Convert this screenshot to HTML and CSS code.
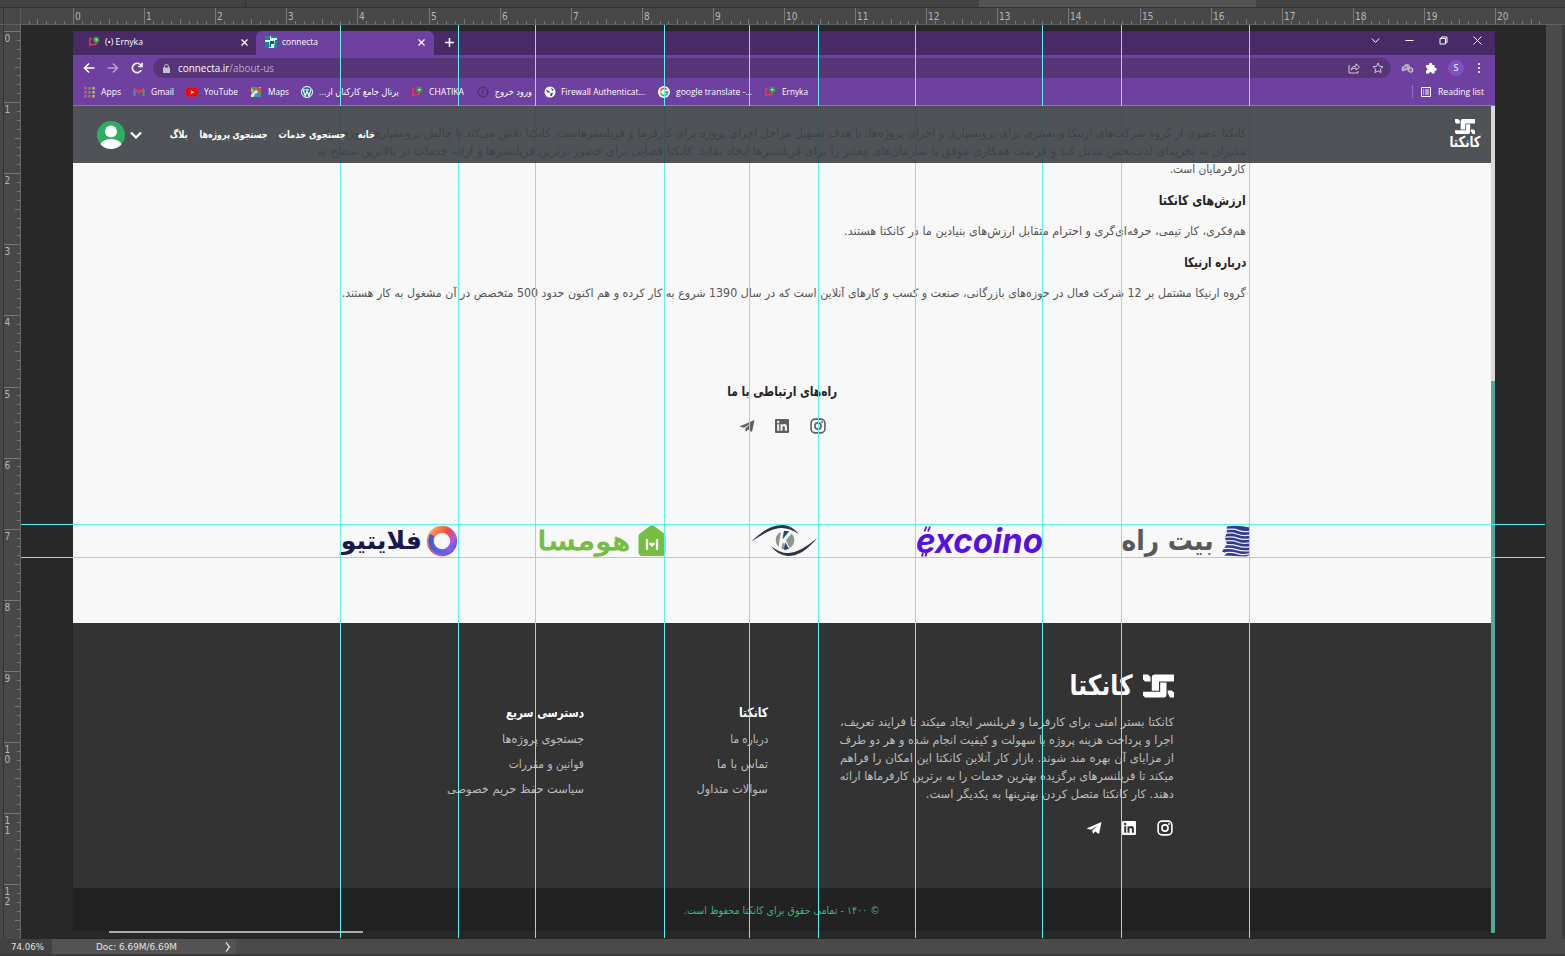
FILE: index.html
```html
<!DOCTYPE html>
<html lang="fa">
<head>
<meta charset="utf-8">
<title>connecta</title>
<link rel="stylesheet" href="styles.css">
</head>
<body>
<svg class="defs" width="0" height="0">
  <defs>
    <linearGradient id="ringA" x1="0" y1="0" x2="1" y2="1"><stop offset="0" stop-color="#ffb054"/><stop offset=".4" stop-color="#f0454c"/><stop offset=".7" stop-color="#b558e8"/><stop offset="1" stop-color="#3b55e0"/></linearGradient>
    <linearGradient id="ringB" x1="0" y1="0" x2="1" y2="0"><stop offset="0" stop-color="#2d62e8"/><stop offset="1" stop-color="#8f5cf0"/></linearGradient>
  </defs>
  <symbol id="mark" viewBox="0 0 31 23"><path fill="#fff" d="M0 0h5l2.500 2.500V7H2L0 5zM12 0h19v7H16v9.200H8.800V3.200Q8.800 0 12 0zM17.200 8h6.300v12q0 3-3 3H2l-2-2v-3.800h17.200zM24.700 18.500V16h4l2.300 2v5h-4z"/></symbol>
  <symbol id="insta" viewBox="0 0 16 16"><g fill="none" stroke="currentColor"><rect x="1.1" y="1.1" width="13.8" height="13.8" rx="3.8" stroke-width="1.6"/><circle cx="8" cy="8" r="3.1" stroke-width="1.6"/></g><circle cx="12" cy="4" r="1" fill="currentColor"/></symbol>
  <symbol id="linkedin" viewBox="0 0 16 16"><path fill="currentColor" fill-rule="evenodd" d="M2 1h12q1 0 1 1v12q0 1-1 1H2q-1 0-1-1V2q0-1 1-1zM3.2 6.3v6.5h2V6.300zM3 4a1.200 1.200 0 1 0 2.400 0A1.200 1.200 0 1 0 3 4zM6.500 6.300v6.500h2V9.500q0-1.500 1.200-1.500T10.900 9.500v3.300h2V9q0-2.900-2.400-2.900-1.300 0-2 1v-.8z"/></symbol>
  <symbol id="plane" viewBox="0 0 16 16"><path fill="currentColor" d="M.5 8.500 15.500 2 13 14 9 11.500 7 14l-.8-3.600L11.800 5.500 5 9.800z"/></symbol>
  <symbol id="erny" viewBox="0 0 12 12"><path d="M4 2.500H1.800v7.200l1.800-1.200H8V7" fill="none" stroke="#e2375f" stroke-width="1.500"/><circle cx="8.300" cy="3.800" r="3.100" fill="#3f9a45"/><circle cx="8.300" cy="3.800" r="1" fill="#d9f1d6"/></symbol>
</svg>

<div class="app">
  <div class="tabstrip"><i class="doc-edge"></i><i class="doc-tab"></i></div>
  <svg class="ruler-h" id="rulerH" width="1565" height="17"></svg>
  <div class="work">
    <svg class="ruler-v" id="rulerV" width="21" height="914"></svg>
    <div class="canvas">
      <div class="browser">
        <div class="titlebar">
          <div class="tab inactive"><svg width="12" height="12"><use href="#erny"/></svg><span class="fit" data-w="38">(•) Ernyka</span><svg class="close" width="7" height="7" viewBox="0 0 7 7"><path d="M.5.5l6 6m0-6l-6 6" stroke="#fff" stroke-width="1.300"/></svg></div>
          <div class="tab active"><svg width="12" height="12" viewBox="0 0 12 12"><path fill="#d9f4ef" d="M0 0h12v12H0z"/><path d="M0 0h5v4H0zM6 0h6v2H6zM0 6h4v6H0zM10 4h2v8H9z" fill="#13888d"/><path d="M5 5h4v3H6v3H4.500z" fill="#0b5f74"/></svg><span class="fit" data-w="36">connecta</span><svg class="close" width="7" height="7" viewBox="0 0 7 7"><path d="M.5.5l6 6m0-6l-6 6" stroke="#fff" stroke-width="1.300"/></svg></div>
          <svg class="plus" width="9" height="9" viewBox="0 0 9 9"><path d="M4.500 0v9M0 4.500h9" stroke="#fff" stroke-width="1.500"/></svg>
          <div class="winctl">
            <svg width="9" height="9" viewBox="0 0 9 9"><path d="M.8 2.500l3.700 4 3.700-4"/></svg>
            <svg width="9" height="9" viewBox="0 0 9 9"><path d="M.5 4.500h8"/></svg>
            <svg width="9" height="9" viewBox="0 0 9 9"><path d="M1 2.500h5.500V8H1zM2.500 2.500V1H8v5.500H6.500"/></svg>
            <svg width="9" height="9" viewBox="0 0 9 9"><path d="M.5.5l8 8m0-8l-8 8"/></svg>
          </div>
        </div>
        <div class="toolbar">
          <div class="navbtns">
            <svg width="12" height="12" viewBox="0 0 12 12"><path d="M11.500 6H1.500M6 1.500L1.500 6 6 10.500"/></svg>
            <svg class="dim" width="12" height="12" viewBox="0 0 12 12"><path d="M.5 6h10M6 1.500L10.500 6 6 10.500"/></svg>
            <svg width="12" height="12" viewBox="0 0 12 12"><path d="M10.300 8A4.700 4.700 0 1 1 9.500 2.700L11 4.500M11 .8v3.700H7.300"/></svg>
          </div>
          <div class="omnibox">
            <svg width="7" height="9" viewBox="0 0 7 9"><path fill="#c9bdd6" stroke="none" d="M0 3.500h7V9H0z"/><path d="M1.500 4V2.500a2 2 0 0 1 4 0V4" fill="none" stroke="#c9bdd6"/></svg>
            <span class="fit url" data-w="96">connecta.ir<span class="path">/about-us</span></span>
            <svg class="share" width="12" height="12" viewBox="0 0 12 12"><path d="M1 3v8h9V9M3 8q.5-4 5-4V1.800L11.500 5 8 8V6Q5 6 3 8z"/></svg>
            <svg width="12" height="12" viewBox="0 0 12 12"><path d="M6 1l1.500 3.300 3.500.4-2.600 2.400.7 3.500L6 8.900l-3.100 1.700.7-3.500L1 4.700l3.500-.4z"/></svg>
          </div>
          <div class="exts">
            <svg width="13" height="12" viewBox="0 0 13 12"><path fill="#b7aabd" d="M.5 7Q.5 4 3 4 4 1 7 2q2 .5 2 3 3 .5 3.500 3 0 2.500-2.500 2.500L6 8 2 9.500Q.5 9 .5 7z"/><circle cx="9.500" cy="8" r="2.200" fill="#84758c" stroke="#ddd" stroke-width=".8"/><path d="M3 6l3-1" stroke="#6f557d"/></svg>
            <svg width="12" height="12" viewBox="0 0 12 12"><path fill="#fff" d="M1 3h3a1.700 1.700 0 1 1 3.200 0H9.500v2.800a1.700 1.700 0 1 1 0 3.200v2.500H7a1.500 1.500 0 0 0-3 0H1V8.500a1.500 1.500 0 0 0 0-3z"/></svg>
            <b class="profile">S</b>
            <svg width="4" height="12" viewBox="0 0 4 12"><g fill="#fff"><circle cx="2" cy="2" r="1.100"/><circle cx="2" cy="6" r="1.100"/><circle cx="2" cy="10" r="1.100"/></g></svg>
          </div>
        </div>
        <div class="bookmarks">
          <div class="bm"><svg width="12" height="12" viewBox="0 0 12 12"><path stroke="#e45a55" stroke-width="2.400" stroke-dasharray="2.500 1.500" d="M2.500 1v11"/><path stroke="#58a36b" stroke-width="2.400" stroke-dasharray="2.500 1.500" d="M6.500 1v11"/><path stroke="#e4b04b" stroke-width="2.400" stroke-dasharray="2.500 1.500" d="M10.500 1v11"/></svg><span class="fit" data-w="20">Apps</span></div>
          <div class="bm"><svg width="12" height="12" viewBox="0 0 12 12"><path d="M1.500 10V3" stroke="#4a86e8" stroke-width="2"/><path d="M10.500 10V3" stroke="#41a463" stroke-width="2"/><path d="M1 2.500l5 4 5-4" stroke="#e34134" stroke-width="2.200" fill="none"/></svg><span class="fit" data-w="23">Gmail</span></div>
          <div class="bm"><svg width="12" height="12" viewBox="0 0 12 12"><rect y="2" width="12" height="8.500" rx="2.200" fill="#f00"/><path d="M4.800 4.200v4l3.500-2z" fill="#fff"/></svg><span class="fit" data-w="34">YouTube</span></div>
          <div class="bm"><svg width="12" height="12" viewBox="0 0 12 12"><path fill="#3fa45b" d="M1 1h10v10H1z"/><path fill="#e8eef3" d="M1 9l8-8h2v2l-8 8H1z"/><path fill="#4385e8" d="M6 7l5 4H7L4 9z"/><path fill="#f0bf3c" d="M1 2l3 3-1 2-2-2z"/><circle cx="8.800" cy="3.400" r="2.400" fill="#e14637"/></svg><span class="fit" data-w="21">Maps</span></div>
          <div class="bm"><svg width="12" height="12" viewBox="0 0 12 12"><circle cx="6" cy="6" r="5.500" fill="#227294" stroke="#fff"/><path d="M2 3.800l2.300 6L6 5l1.900 4.800L10 3.500M1.500 3.800h3M5 3.800h3" fill="none" stroke="#fff" stroke-width="1.100"/></svg><span class="fit fa" data-w="80">پرتال جامع کارکنان ار...</span></div>
          <div class="bm"><svg width="12" height="12"><use href="#erny"/></svg><span class="fit" data-w="35">CHATIKA</span></div>
          <div class="bm"><svg width="12" height="12" viewBox="0 0 12 12"><circle cx="6" cy="6" r="4.800" fill="none" stroke="#4b3560" stroke-width="1.400" stroke-dasharray="3.500 .8"/><path d="M6 3v3.500L4.500 8" fill="none" stroke="#4b3560"/></svg><span class="fit fa" data-w="37">ورود خروج</span></div>
          <div class="bm"><svg width="12" height="12" viewBox="0 0 12 12"><circle cx="6" cy="6" r="5.500" fill="#fff"/><path d="M2 3.500l3 1.500 1 2-2.500-.5zM7 2l3 1.500-2 1.500zM6.500 7.500L9 6.500 8 10 6 9.500z" fill="#56327d"/></svg><span class="fit" data-w="84">Firewall Authenticat...</span></div>
          <div class="bm"><svg width="12" height="12" viewBox="0 0 12 12"><circle cx="6" cy="6" r="6" fill="#fff"/><g fill="none" stroke-width="1.700"><path d="M8.500 3.500A3.600 3.600 0 0 0 2.700 4.600" stroke="#e94235"/><path d="M2.700 4.400a3.600 3.600 0 0 0 0 3.200" stroke="#fbbc05"/><path d="M2.700 7.500a3.600 3.600 0 0 0 5.500 1.300" stroke="#34a853"/><path d="M8.200 8.800A3.600 3.600 0 0 0 9.600 6H6" stroke="#4285f4"/></g></svg><span class="fit" data-w="76">google translate -...</span></div>
          <div class="bm"><svg width="12" height="12"><use href="#erny"/></svg><span class="fit" data-w="26">Ernyka</span></div>
          <div class="bm reading"><svg width="10" height="10" viewBox="0 0 10 10"><path d="M.5.5h9v9h-9zM2 3h1.200M4.200 3H8M2 5h1.200M4.200 5H8M2 7h1.200M4.200 7H8" fill="none" stroke="#fff"/></svg><span class="fit" data-w="46">Reading list</span></div>
        </div>

        <div class="viewport">
          <div class="page">
            <header class="site-header">
              <svg width="28" height="28" viewBox="0 0 28 28"><clipPath id="av"><circle cx="14" cy="14" r="14"/></clipPath><g clip-path="url(#av)"><path fill="#2fae60" d="M0 0h28v28H0z"/><circle cx="14" cy="10.500" r="6" fill="#fff"/><ellipse cx="14" cy="25" rx="11" ry="7" fill="#fff"/></g></svg>
              <svg class="chev" width="12" height="8" viewBox="0 0 12 8"><path d="M1 1.500l5 5 5-5" fill="none" stroke="#fff" stroke-width="2.200"/></svg>
              <nav class="menu">
                <a class="fit fa" data-w="18">بلاگ</a><a class="fit fa" data-w="68">جستجوی پروژه‌ها</a><a class="fit fa" data-w="67">جستجوی خدمات</a><a class="fit fa" data-w="17">خانه</a>
              </nav>
              <div class="brand"><svg width="20" height="15"><use href="#mark"/></svg><b class="fit fa" data-w="31">کانکتا</b></div>
            </header>
            <main class="content">
              <div class="article">
                <p class="fit fa" data-w="928">کانکتا عضوی از گروه شرکت‌های ارنیکا و بستری برای برونسپاری و اجرای پروژه‌ها، با هدف تسهیل مراحل اجرای پروژه برای کارفرما و فریلنسرهاست. کانکتا تلاش می‌کند تا چالش برونسپاری پروژه برای</p>
                <p class="fit fa" data-w="928">مدیران به تجربه‌ای لذت‌بخش تبدیل کند و فرصت همکاری موفق با سازمان‌های معتبر را برای فریلنسرها ایجاد نماید. کانکتا فضایی برای حضور برترین فریلنسرها و ارائه خدمات در بالاترین سطح به</p>
                <p class="fit fa" data-w="76">کارفرمایان است.</p>
                <h2 class="fit fa" data-w="87">ارزش‌های کانکتا</h2>
                <p class="fit fa" data-w="402">هم‌فکری، کار تیمی، حرفه‌ای‌گری و احترام متقابل ارزش‌های بنیادین ما در کانکتا هستند.</p>
                <h2 class="fit fa" data-w="62">درباره ارنیکا</h2>
                <p class="fit fa" data-w="904">گروه ارنیکا مشتمل بر 12 شرکت فعال در حوزه‌های بازرگانی، صنعت و کسب و کارهای آنلاین است که در سال 1390 شروع به کار کرده و هم اکنون حدود 500 متخصص در آن مشغول به کار هستند.</p>
              </div>
              <div class="contact">
                <h2 class="fit fa" data-w="110">راه‌های ارتباطی با ما</h2>
                <div class="social"><svg><use href="#plane"/></svg><svg><use href="#linkedin"/></svg><svg><use href="#insta"/></svg></div>
              </div>
              <div class="partners">
                <div class="partner flytio"><b class="fit fa" data-w="81">فلایتیو</b><svg width="32" height="32" viewBox="0 0 32 32"><circle cx="16" cy="16" r="11.700" fill="none" stroke="url(#ringA)" stroke-width="7"/><path d="M6 10a11.700 11.700 0 0 0 20 12" fill="none" stroke="url(#ringB)" stroke-width="4.500"/></svg></div>
                <div class="partner homsa"><b class="fit fa" data-w="93">هومسا</b><svg width="28" height="31" viewBox="0 0 28 31"><path fill="#76bd43" d="M12 1q2-1.500 4 0l10 7.500q1.500 1 1.500 3V27q0 4-4 4h-19q-4 0-4-4V11.500q0-2 1.500-3z"/><path d="M9 14v11M19 14v11" stroke="#fff" stroke-width="2.200"/><path fill="#fff" d="M14 22l-3-3q0-2.500 3-1 3-1.500 3 1z"/></svg></div>
                <div class="partner eye"><svg width="68" height="33" viewBox="0 0 68 33"><path fill="#333448" d="M1 18Q18 0 34 1q8 1 15 9Q38 3 30 4 19 5 1 18zM67 14Q53 32 38 32 27 31 21 22q10 8 18 7 12-1 28-15z"/><circle cx="35" cy="16" r="9.300" fill="#8e9694"/><path fill="#f7f7f7" d="M31 7h3l-2 8 8-8h4l-8 9 4 9h-4l-3-7-2 8h-3z"/><path fill="#174d72" d="M34 7h5l-6 8zM35 18l4 7-5 1z"/></svg></div>
                <div class="partner excoino"><svg width="14" height="33" viewBox="0 0 14 33"><path d="M6.500 7.500l2-5M10 7.500l2-5M4 32.500l1-4M7.500 32.500l1-4" stroke="#5511e0" stroke-width="1.800"/></svg><b class="fit" data-w="127">excoino</b></div>
                <div class="partner beyt"><b class="fit fa" data-w="92">بیت راه</b><svg width="28" height="32" viewBox="0 0 29 32"><path fill="#343b8c" d="M5 1q10-2 24 1v28q-2 2-5 2l-22-1 3-2-5-2 5-8-2-7 2-4z"/><path d="M5 4q8-1 12 1t12 1M3 8q8-1 13 1t13 1M3 12q8-1 13 1t13 1M2 16q10-1 14 1t13 1M1 20q10-1 15 1t13 1M1 24q8-1 14 1t14 1M3 28q8-1 13 1t13 0" fill="none" stroke="#eef0f8" stroke-width="1.300"/></svg></div>
              </div>
            </main>
            <footer class="site-footer">
              <div class="col quick"><h3 class="fit fa" data-w="78">دسترسی سریع</h3><a class="fit fa" data-w="82">جستجوی پروژه‌ها</a><a class="fit fa" data-w="75">قوانین و مقررات</a><a class="fit fa" data-w="137">سیاست حفظ حریم خصوصی</a></div>
              <div class="col links"><h3 class="fit fa" data-w="29">کانکتا</h3><a class="fit fa" data-w="38">درباره ما</a><a class="fit fa" data-w="51">تماس با ما</a><a class="fit fa" data-w="71">سوالات متداول</a></div>
              <div class="about">
                <div class="logo"><b class="fit fa" data-w="63">کانکتا</b><svg width="31" height="24"><use href="#mark"/></svg></div>
                <p class="fit fa" data-w="334">کانکتا بستر امنی برای کارفرما و فریلنسر ایجاد میکند تا فرایند تعریف،</p>
                <p class="fit fa" data-w="334">اجرا و پرداخت هزینه پروژه با سهولت و کیفیت انجام شده و هر دو طرف</p>
                <p class="fit fa" data-w="334">از مزایای آن بهره مند شوند. بازار کار آنلاین کانکتا این امکان را فراهم</p>
                <p class="fit fa" data-w="334">میکند تا فریلنسرهای برگزیده بهترین خدمات را به برترین کارفرماها ارائه</p>
                <p class="fit fa" data-w="248">دهند. کار کانکتا متصل کردن بهترینها به یکدیگر است.</p>
                <div class="social"><svg><use href="#plane"/></svg><svg><use href="#linkedin"/></svg><svg><use href="#insta"/></svg></div>
              </div>
            </footer>
            <div class="copyright"><span class="fit fa" data-w="196">© ۱۴۰۰ - تمامی حقوق برای کانکتا محفوظ است.</span></div>
            <div class="edge"></div>
          </div>
          <div class="scroll"></div>
        </div>
      </div>
    </div>
    <div class="side"></div>
  </div>
  <div class="status"><span class="zoom"><span class="fit" data-w="33">74.06%</span></span><span class="doc"><span class="fit" data-w="81">Doc: 6.69M/6.69M</span><svg width="6" height="10" viewBox="0 0 6 10"><path d="M1 .5L4.500 5 1 9.500" fill="none" stroke="#ddd" stroke-width="1.300"/></svg></span></div>
  <svg class="guides" id="guides" width="1565" height="956"></svg>
</div>
<script src="main.js"></script>
</body>
</html>
```
FILE: styles.css
```css
* { box-sizing: border-box; }
body { margin: 0; background: #282828; overflow: hidden; }
svg { display: block; flex: none; }
.defs { position: absolute; }
h2, h3, p { margin: 0; }

.fit { display: block; flex: none; white-space: nowrap; }
.fit > .ink { display: inline-block; transform-origin: left center; }
.fit.fa { direction: rtl; text-align: right; font-family: "DejaVu Sans", sans-serif; }
.fit.fa > .ink { transform-origin: right center; }

.app { position: relative; width: 1565px; height: 956px; display: flex; flex-direction: column; font-family: "Open Sans", sans-serif; }
.tabstrip { height: 8px; background: #424242; border-bottom: 1px solid #333; display: flex; }
.doc-edge { width: 246px; border-right: 1px solid #333; }
.doc-tab { margin-left: 733px; width: 277px; background: #535353; }
.ruler-h { background: #484848; border-bottom: 1px solid #5f6060; }
.work { display: flex; height: 914px; }
.ruler-v { background: #484848; border-right: 1px solid #686868; }
.canvas { width: 1525px; padding: 6px 0 0 52px; background: #282828; }
.side { flex: 1; background: #4a4a4a; border-right: 3px solid #3b3b3b; }
.status { height: 17px; display: flex; background: #4a4a4a; border-bottom: 2px solid #3b3939; color: #e2e2e2; font: 9.5px/16px "DejaVu Sans Condensed", "DejaVu Sans", sans-serif; }
.zoom { width: 52px; padding-left: 11px; background: #424242; }
.doc { width: 184px; padding-left: 44px; display: flex; align-items: center; gap: 48px; background: #535353; }
.guides { position: absolute; left: 0; top: 0; pointer-events: none; }
.ruler-text { font: 10px "DejaVu Sans Condensed", "DejaVu Sans", sans-serif; fill: #b5b5b5; }

.browser { width: 1422px; height: 902px; color: #fff; font-size: 9.5px; }
.titlebar { height: 24px; display: flex; align-items: center; background: #482a66; }
.tab { height: 24px; display: flex; align-items: center; padding-bottom: 2px; }
.tab .fit { margin-top: -1px; }
.tab .close { margin-left: auto; }
.inactive { width: 183px; padding-left: 15px; padding-right: 8px; gap: 5px; }
.active { width: 178px; padding-left: 9px; padding-right: 9px; gap: 5px; background: #6e40a0; border-radius: 6px 6px 0 0; }
.plus { margin: -2px 0 0 11px; }
.winctl { margin-left: auto; display: flex; gap: 25px; padding: 0 13px 6px 0; fill: none; stroke: #fff; stroke-width: 1; }
.toolbar { height: 26px; display: flex; align-items: center; background: #6e40a0; }
.navbtns { width: 80px; padding-left: 10px; display: flex; gap: 12px; fill: none; stroke: #fff; stroke-width: 1.600; }
.dim { opacity: .5; }
.omnibox { width: 1238px; height: 20px; border-radius: 10px; background: #573478; display: flex; align-items: center; padding: 0 7px 0 10px; gap: 8px; font-size: 10px; fill: none; stroke: #d5cadd; stroke-width: 1; }
.omnibox .share { margin-left: auto; margin-right: 4px; }
.path { color: #b7a6c9; }
.exts { display: flex; align-items: center; gap: 11px; padding-left: 10px; }
.profile { width: 16px; height: 16px; border-radius: 50%; background: #7d52c4; text-align: center; font: 9px/16px "Open Sans", sans-serif; }
.exts > :last-child { margin-left: 2px; }
.bookmarks { height: 25px; display: flex; align-items: center; gap: 12.300px; padding: 0 11px 3px 10px; background: #6e40a0; border-bottom: 1px solid #9271b4; }
.bm { display: flex; align-items: center; gap: 5.800px; }
.bm .fa { font-size: 9.500px; }
.reading { margin-left: auto; padding-left: 8px; gap: 7px; border-left: 1px solid #9271b4; }

.viewport { display: flex; height: 827px; }
.page { position: relative; width: 1418px; }
.scroll { width: 4px; background: linear-gradient(#d8d8d8 275px, #57a69a 275px); }
.site-header { position: absolute; z-index: 1; left: 0; top: 0; width: 1418px; height: 57px; display: flex; align-items: center; padding: 0 11px 0 24px; background: rgba(60, 64, 69, .9); }
.chev { margin-left: 5px; }
.menu { display: flex; gap: 11.500px; margin: -2px 0 0 28px; font-weight: bold; font-size: 10.500px; }
.brand { margin-left: auto; display: flex; flex-direction: column; align-items: center; font-size: 15px; line-height: 17px; }

.content { height: 517px; padding-top: 18px; background: #f8f8f8; color: #555; }
.article { padding-right: 245px; display: flex; flex-direction: column; align-items: flex-end; }
.article p { font-size: 11.500px; line-height: 18px; }
.content h2 { font-size: 13.500px; line-height: 22px; color: #252525; }
.article h2 { margin: 11px 0; }
.contact { margin-top: 78px; display: flex; flex-direction: column; align-items: center; gap: 16px; color: #606060; }
.social { display: flex; gap: 19.500px; }
.social svg { width: 16px; height: 16px; }
.partners { margin-top: 90px; padding-left: 268px; display: flex; height: 33px; }
.partner { display: flex; align-items: center; height: 33px; }
.partner b { line-height: 30px; }
.flytio { width: 195px; gap: 4px; color: #19174b; font-size: 25px; }
.homsa { width: 214px; gap: 8px; padding-left: 1px; color: #76bd43; font-size: 26px; }
.homsa b { font-weight: normal; -webkit-text-stroke: 1px #76bd43; }
.eye { width: 166px; }
.excoino { position: relative; width: 206px; color: #5511e0; }
.excoino svg { position: absolute; left: 2px; top: 0; }
.excoino b { font: italic bold 34px/30px "Inter", "Open Sans", sans-serif; }
.beyt { gap: 8px; color: #58595b; font-size: 28px; }

.site-footer { height: 265px; padding-left: 374px; display: flex; background: #333; color: #bdbdbd; }
.col { padding-top: 81px; display: flex; flex-direction: column; align-items: flex-end; font-size: 11.500px; line-height: 25px; }
.col h3 { margin-bottom: 5px; font-size: 13px; line-height: 18px; color: #fff; }
.quick { width: 137px; }
.links { width: 71px; margin-left: 113px; }
.about { width: 334px; margin-left: 71.500px; padding-top: 51px; display: flex; flex-direction: column; align-items: flex-end; font-size: 11.500px; line-height: 18px; }
.logo { display: flex; align-items: center; gap: 10px; height: 24px; margin-bottom: 15px; color: #fff; font-size: 28px; }
.about .social { margin-top: 17px; padding-right: 1px; color: #fff; }
.copyright { height: 43px; display: flex; justify-content: center; align-items: center; background: #222; color: #3fb283; font-size: 10.500px; }
.edge { height: 2px; background: linear-gradient(90deg, #26282b 36px, #aaa 36px, #aaa 290px, #26282b 290px); }
```
FILE: main.js
```js
// Condense or widen each text run to its column measure.
document.querySelectorAll('.fit').forEach(function (el) {
  var w = +el.dataset.w;
  var ink = document.createElement('span');
  ink.className = 'ink';
  while (el.firstChild) ink.appendChild(el.firstChild);
  el.appendChild(ink);
  var natural = ink.getBoundingClientRect().width;
  ink.style.transform = 'scaleX(' + w / natural + ')';
  el.style.width = w + 'px';
});

function line(x1, y1, x2, y2, color) {
  return '<path d="M' + x1 + ' ' + y1 + 'L' + x2 + ' ' + y2 + '" stroke="' + color + '"/>';
}
function label(x, y, t) {
  return '<text class="ruler-text" x="' + x + '" y="' + y + '">' + t + '</text>';
}

// Rulers: one unit is 71.1px, divided in eighths.
var unit = 71.1, h = '', v = '', i, p, len;
for (i = -5; i <= 165; i++) {
  p = Math.round(73 + i * unit / 8) + 0.5;
  if (p > 1545) break;
  len = i % 8 === 0 ? 16 : i % 4 === 0 ? 5 : 3;
  h += line(p, 16 - len, p, 16, '#777');
  if (i % 8 === 0) h += label(p + 1.5, 12, i / 8);
}
for (i = 0; i <= 101; i++) {
  p = Math.round(6 + i * unit / 8) + 0.5;
  len = i % 8 === 0 ? 16 : i % 4 === 0 ? 5 : 3;
  v += line(20 - len, p, 20, p, '#777');
  if (i % 8 === 0) String(i / 8).split('').forEach(function (d, k) { v += label(4.5, p + 10 + k * 10, d); });
}
v += line(3.5, 0, 3.5, 914, '#333');
h += line(3.5, 0, 3.5, 16, '#333') + line(20.5, 0, 20.5, 16, '#5c5c5c');
document.getElementById('rulerH').innerHTML = h;
document.getElementById('rulerV').innerHTML = v;

var g = '';
[340, 458, 535, 664, 749, 818, 915, 1042, 1121, 1249].forEach(function (x) { g += '<rect fill="#5ff0f0" x="' + x + '" y="25" width="1" height="913"/>'; });
[524, 557].forEach(function (y) { g += '<rect fill="#5ff0f0" x="21" y="' + y + '" width="1524" height="1"/>'; });
document.getElementById('guides').innerHTML = g;
```
